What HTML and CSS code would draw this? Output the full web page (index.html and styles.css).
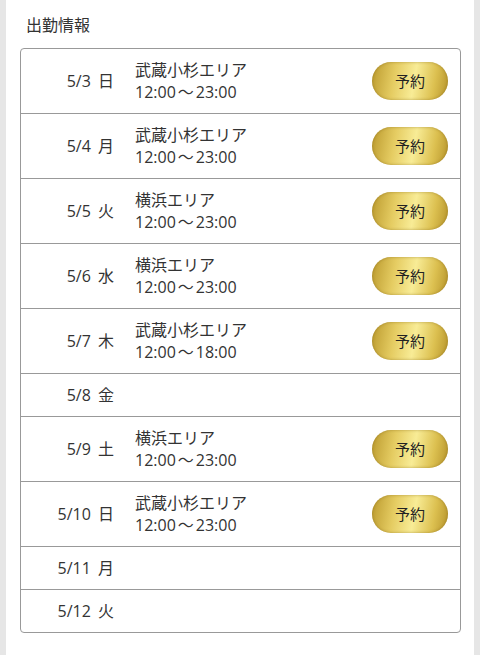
FILE: index.html
```html
<!DOCTYPE html>
<html lang="ja">
<head>
<meta charset="utf-8">
<link rel="stylesheet" href="styles.css">
</head>
<body>
<div class="panel">
  <h2 class="title">出勤情報</h2>
  <div class="table">
    <div class="row"><div class="date">5/3 日</div><div class="info"><div>武蔵小杉エリア</div><div>12:00<span class="wave">〜</span>23:00</div></div><a class="btn">予約</a></div>
    <div class="row"><div class="date">5/4 月</div><div class="info"><div>武蔵小杉エリア</div><div>12:00<span class="wave">〜</span>23:00</div></div><a class="btn">予約</a></div>
    <div class="row"><div class="date">5/5 火</div><div class="info"><div>横浜エリア</div><div>12:00<span class="wave">〜</span>23:00</div></div><a class="btn">予約</a></div>
    <div class="row"><div class="date">5/6 水</div><div class="info"><div>横浜エリア</div><div>12:00<span class="wave">〜</span>23:00</div></div><a class="btn">予約</a></div>
    <div class="row"><div class="date">5/7 木</div><div class="info"><div>武蔵小杉エリア</div><div>12:00<span class="wave">〜</span>18:00</div></div><a class="btn">予約</a></div>
    <div class="row"><div class="date">5/8 金</div></div>
    <div class="row"><div class="date">5/9 土</div><div class="info"><div>横浜エリア</div><div>12:00<span class="wave">〜</span>23:00</div></div><a class="btn">予約</a></div>
    <div class="row"><div class="date">5/10 日</div><div class="info"><div>武蔵小杉エリア</div><div>12:00<span class="wave">〜</span>23:00</div></div><a class="btn">予約</a></div>
    <div class="row"><div class="date">5/11 月</div></div>
    <div class="row"><div class="date">5/12 火</div></div>
  </div>
</div>
</body>
</html>
```
FILE: styles.css
```css
html, body {
  margin: 0;
  padding: 0;
  background: #e6e6e6;
  height: 100%;
}
body {
  font-family: "Open Sans", "Noto Sans CJK JP", sans-serif;
  color: #333;
  font-size: 16px;
}
.panel {
  margin: 0 6px;
  background: #fff;
  min-height: 100%;
  padding: 14px 13px 20px 14px;
  box-sizing: border-box;
}
.title {
  margin: 0 0 12px 6px;
  font-size: 16px;
  font-weight: normal;
  line-height: 22px;
}
.table {
  border: 1px solid #999;
  border-radius: 4px;
}
.row {
  display: flex;
  align-items: center;
  padding: 10px 12px 10px 0;
  border-top: 1px solid #999;
  line-height: 22px;
}
.row:first-child {
  border-top: none;
}
.date {
  width: 93px;
  text-align: right;
  flex: none;
  word-spacing: 3px;
}
.info {
  margin-left: 21px;
  flex: 1;
}
.wave {
  margin: 0 2px;
}
.btn {
  flex: none;
  width: 76px;
  height: 38px;
  border-radius: 19px;
  display: flex;
  align-items: center;
  justify-content: center;
  color: #222;
  font-size: 15px;
  background: linear-gradient(100deg, #bb9a2e 0%, #e5cc62 30%, #f8ec96 55%, #dcc050 80%, #b6942c 100%);
  box-shadow: inset 0 0 3px rgba(120, 90, 10, 0.5);
}
```
